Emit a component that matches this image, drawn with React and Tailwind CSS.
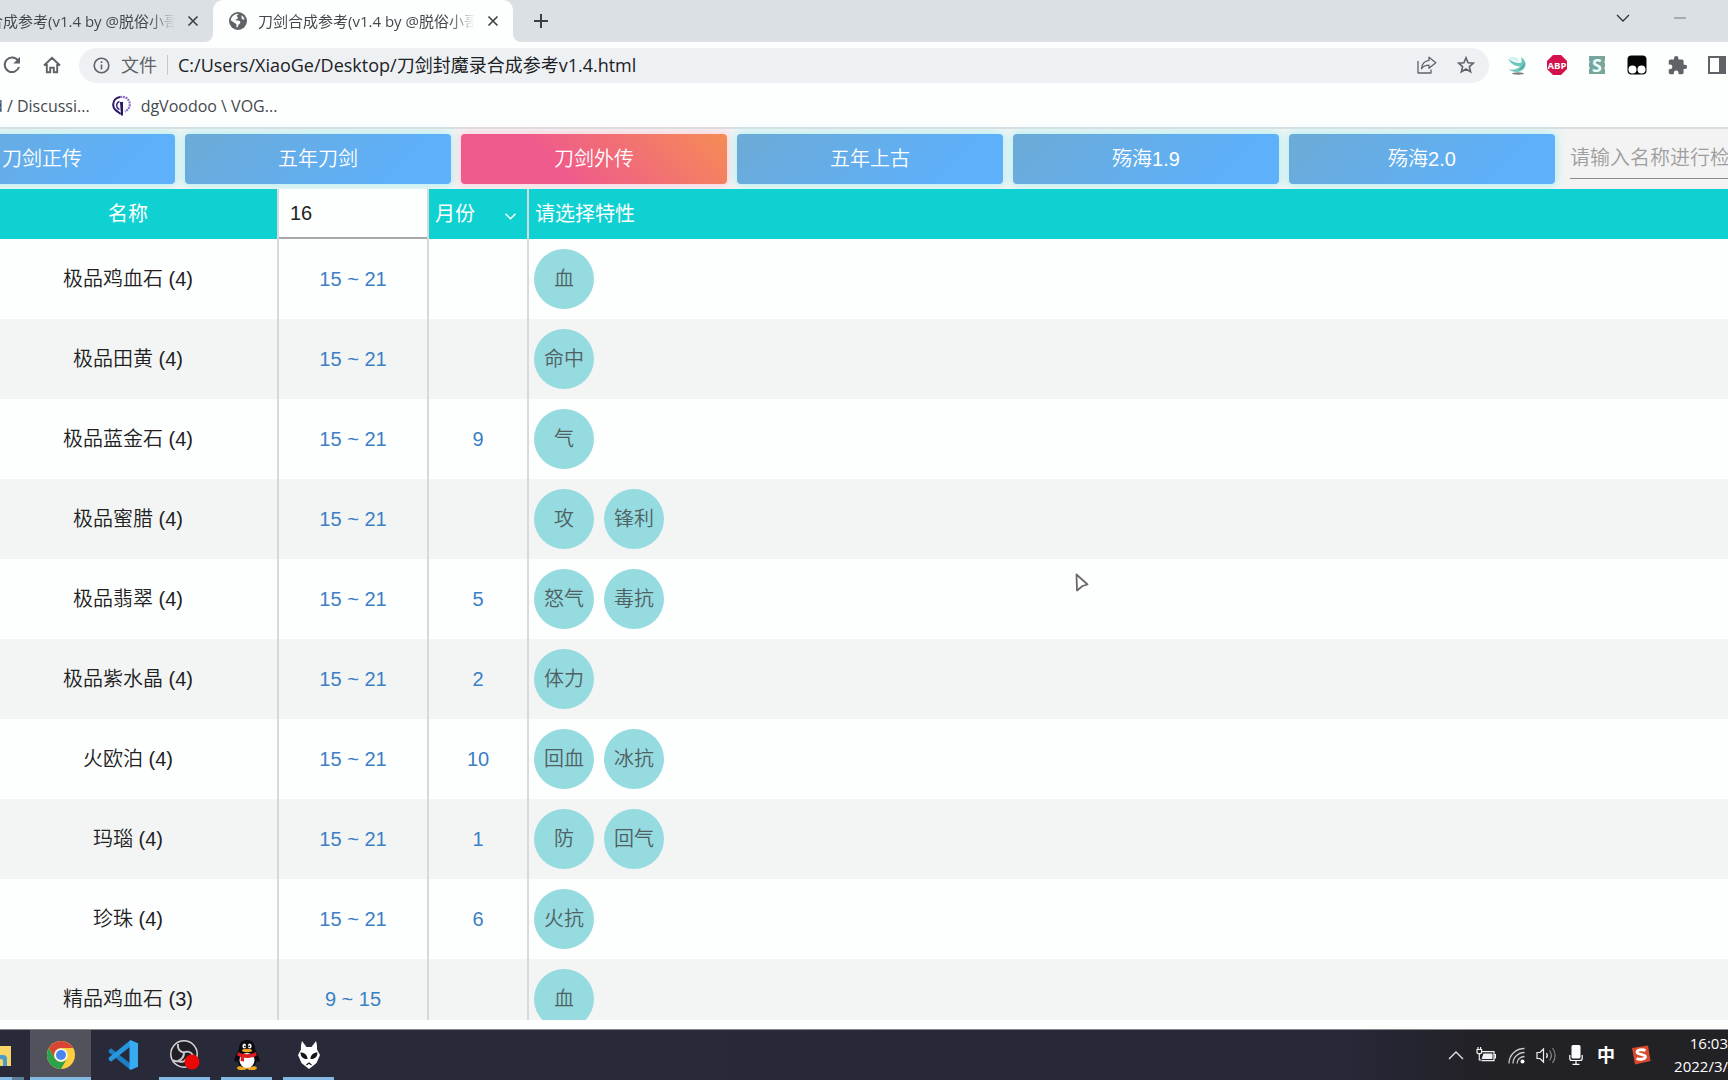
import React, { useState } from "react";

const UI_FONT = "font-['Open_Sans','Noto_Sans_CJK_SC',sans-serif]";

const versions = ["刀剑正传", "五年刀剑", "刀剑外传", "五年上古", "殇海1.9", "殇海2.0"];

const rows = [
  { name: "极品鸡血石 (4)", level: "15 ~ 21", month: "", traits: ["血"] },
  { name: "极品田黄 (4)", level: "15 ~ 21", month: "", traits: ["命中"] },
  { name: "极品蓝金石 (4)", level: "15 ~ 21", month: "9", traits: ["气"] },
  { name: "极品蜜腊 (4)", level: "15 ~ 21", month: "", traits: ["攻", "锋利"] },
  { name: "极品翡翠 (4)", level: "15 ~ 21", month: "5", traits: ["怒气", "毒抗"] },
  { name: "极品紫水晶 (4)", level: "15 ~ 21", month: "2", traits: ["体力"] },
  { name: "火欧泊 (4)", level: "15 ~ 21", month: "10", traits: ["回血", "冰抗"] },
  { name: "玛瑙 (4)", level: "15 ~ 21", month: "1", traits: ["防", "回气"] },
  { name: "珍珠 (4)", level: "15 ~ 21", month: "6", traits: ["火抗"] },
  { name: "精品鸡血石 (3)", level: "9 ~ 15", month: "", traits: ["血"] },
];

function CloseIcon() {
  return (
    <svg width="12" height="12" viewBox="0 0 12 12" stroke="#3c4043" strokeWidth="1.6">
      <path d="M1.5 1.5l9 9M10.5 1.5l-9 9" />
    </svg>
  );
}

function GlobeIcon() {
  return (
    <svg width="18" height="18" viewBox="0 0 18 18">
      <circle cx="9" cy="9" r="9" fill="#5f6368" />
      <path
        d="M9.6 1.8c-.4 1.2-1.6 1-1.8 2.2-.1.9 1.3.8 1.1 1.9-.2 1.2-1.4.8-2 1.6-.4.6.2 1.1 1 1.1 1.5 0 3.2.3 3.4 1.7.2 1.4-1.5 1.7-2 3-.3.8-.5 1.7-1.2 2.5-.9-.5-.6-1.9-.6-2.8 0-1.6-1.7-1.6-2.6-2.5L1.8 8.3C2.1 5 5.2 1.7 9.6 1.8z"
        fill="#fdfefe"
      />
      <path d="M12.4 3.2c1.5.9 2.7 2.3 3.1 4-1 .4-2.3.2-2.8-.8-.4-.9.2-2.1-.3-3.2z" fill="#fdfefe" />
    </svg>
  );
}

function Tab({ active }) {
  return (
    <div
      className={
        active
          ? "relative flex w-[300px] shrink-0 items-center rounded-t-[10px] bg-[#fdfefe] pl-4"
          : "-ml-[87px] flex w-[300px] shrink-0 items-center pl-4"
      }
    >
      {active && (
        <>
          <svg className="absolute bottom-0 -left-2" width="8" height="8" viewBox="0 0 8 8">
            <path d="M8 0v8H0a8 8 0 0 0 8-8z" fill="#fdfefe" />
          </svg>
          <svg className="absolute -right-2 bottom-0" width="8" height="8" viewBox="0 0 8 8">
            <path d="M0 0v8h8a8 8 0 0 1-8-8z" fill="#fdfefe" />
          </svg>
        </>
      )}
      <GlobeIcon />
      <span className="ml-[11px] w-[217px] shrink-0 overflow-hidden text-[15px] whitespace-nowrap text-[#45494d] [mask-image:linear-gradient(to_right,#000_88%,transparent)]">
        刀剑合成参考(v1.4 by @脱俗小哥
      </span>
      <button aria-label="关闭标签页" className="ml-3">
        <CloseIcon />
      </button>
    </div>
  );
}

function TabStrip() {
  return (
    <div className="flex h-[42px] shrink-0 bg-[#dbe0e4]">
      <Tab />
      <Tab active />
      <button aria-label="新标签页" className="ml-5">
        <svg width="16" height="16" viewBox="0 0 16 16" stroke="#3c4043" strokeWidth="2">
          <path d="M8 1v14M1 8h14" />
        </svg>
      </button>
      <div className="ml-auto flex h-9 items-center gap-11 pr-[42px]">
        <button aria-label="搜索标签页">
          <svg width="14" height="8" viewBox="0 0 14 8" fill="none" stroke="#303336" strokeWidth="1.3">
            <path d="M1 1l6 6 6-6" />
          </svg>
        </button>
        <button aria-label="最小化">
          <svg width="12" height="8" viewBox="0 0 12 8" stroke="#8b8f93" strokeWidth="1.3">
            <path d="M0 4h12" />
          </svg>
        </button>
      </div>
    </div>
  );
}

function AddressBar() {
  return (
    <div className="flex h-[46px] shrink-0 items-center bg-[#fdfefe]">
      <button aria-label="重新加载" className="-ml-2 flex w-10 shrink-0 justify-center">
        <svg width="18" height="18" viewBox="0 0 18 18">
          <path d="M15 4.5A7.3 7.3 0 1 0 16 11" fill="none" stroke="#5f6368" strokeWidth="2" />
          <path d="M17 0.8v6.7h-6.7z" fill="#5f6368" />
        </svg>
      </button>
      <button aria-label="主页" className="flex w-10 shrink-0 justify-center">
        <svg width="18" height="18" viewBox="0 0 18 18" fill="none" stroke="#5f6368" strokeWidth="1.9">
          <path d="M1 9.5L9 1.8l8 7.7M3.8 8v8.2h3.4v-4.5h3.6v4.5h3.4V8" />
        </svg>
      </button>
      <div className="ml-[7px] flex h-[35px] min-w-0 flex-1 items-center rounded-full bg-[#eef1f3] px-[14px]">
        <svg width="17" height="17" viewBox="0 0 17 17" fill="none" stroke="#5f6368" strokeWidth="1.6">
          <circle cx="8.5" cy="8.5" r="7.3" />
          <path d="M8.5 7.5v5M8.5 4.3v1.8" />
        </svg>
        <span className="ml-[11px] text-lg text-[#5f6368]">文件</span>
        <span className="mx-[10px] h-5 w-px bg-[#c4c8cb]" />
        <input
          aria-label="地址"
          className="min-w-0 flex-1 bg-transparent text-lg text-[#202124] outline-none"
          defaultValue="C:/Users/XiaoGe/Desktop/刀剑封魔录合成参考v1.4.html"
        />
        <button aria-label="分享" className="mr-5">
          <svg width="20" height="18" viewBox="0 0 20 18" fill="none" stroke="#5f6368" strokeWidth="1.3" strokeLinejoin="round">
            <path d="M1 5v12h13v-3.5" />
            <path d="M12 1.2l6.8 5.6L12 12.3V9.2c-3.4 0-5.8 1.2-7.5 3.5.4-4.3 3-7.700 7.500-8.300z" />
          </svg>
        </button>
        <button aria-label="收藏">
          <svg width="18" height="18" viewBox="0 0 18 18" fill="none" stroke="#5f6368" strokeWidth="1.6">
            <path d="M9 1.8l2.1 4.900 5.300.4-4 3.500 1.200 5.200L9 13l-4.600 2.800 1.200-5.200-4-3.500 5.300-.4z" />
          </svg>
        </button>
      </div>
      <Extensions />
    </div>
  );
}

function Extensions() {
  return (
    <div className="-mr-[9px] ml-2 flex shrink-0 items-center">
      <button aria-label="Internet Download" className="flex w-10 justify-center">
        <svg width="20" height="20" viewBox="0 0 20 20">
          <ellipse cx="11" cy="18.5" rx="6" ry="1.2" fill="#777d7c" />
          <path d="M1 3.5c3 2.5 7.5 4.5 13 4.5.8-2 .8-4-.2-6C18.5 4.5 20 9.5 17 13.5c-3.5 4.5-10.5 4.5-15.5 1 5.5.5 10-.5 11.5-3C8 11.5 3.5 8.5 1 3.5z" fill="#6fc7be" />
          <path d="M2 3c3-1.8 6-1.5 8.5.5l2 3C8.5 6.5 4.5 5 2 3z" fill="#d2f1ee" />
          <path d="M17.5 7c.8 4-2 7.5-7 8.5 3.5-2 6-4.5 7-8.5z" fill="#489b94" />
        </svg>
      </button>
      <button aria-label="Adblock Plus" className="flex w-10 justify-center">
        <svg width="20" height="20" viewBox="0 0 20 20">
          <path d="M6 0h8l6 6v8l-6 6H6l-6-6V6z" fill="#d2114d" />
          <text x="10" y="13.5" fontSize="9.5" fontWeight="700" fill="#fff" textAnchor="middle" fontFamily="Open Sans">
            ABP
          </text>
        </svg>
      </button>
      <button aria-label="Stylus" className="flex w-10 justify-center">
        <svg width="18" height="20" viewBox="0 0 18 20">
          <path d="M1 1h16v5l-1 1 1 1v4l-1 1 1 1v5H1v-5l1-1-1-1V8l1-1-1-1z" fill="#78a69c" />
          <text x="9" y="16.5" fontSize="18" fontWeight="700" fill="#e9fffa" textAnchor="middle" fontFamily="Open Sans">
            S
          </text>
        </svg>
      </button>
      <button aria-label="Tampermonkey" className="flex w-10 justify-center">
        <svg width="20" height="20" viewBox="0 0 20 20">
          <rect x="0.5" y="0.5" width="19" height="19" rx="4" fill="#050505" />
          <circle cx="5.5" cy="14.5" r="4" fill="#fff" />
          <circle cx="14.5" cy="14.5" r="4" fill="#fff" />
        </svg>
      </button>
      <button aria-label="扩展程序" className="flex w-10 justify-center">
        <svg width="21" height="21" viewBox="0 0 24 24" fill="#5f6368">
          <path d="M20.5 11H19V7c0-1.1-.9-2-2-2h-4V3.5a2.5 2.5 0 0 0-5 0V5H4c-1.1 0-2 .9-2 2v3.8h1.5a2.7 2.7 0 0 1 0 5.4H2V20c0 1.1.9 2 2 2h3.8v-1.5a2.7 2.7 0 0 1 5.4 0V22H17c1.1 0 2-.9 2-2v-4h1.5a2.5 2.5 0 0 0 0-5z" />
        </svg>
      </button>
      <button aria-label="侧边栏" className="flex w-10 items-center justify-center">
        <svg width="18" height="18" viewBox="0 0 18 18">
          <path d="M1 1h16v16H1z" fill="none" stroke="#5f6368" strokeWidth="2" />
          <path d="M11 1h6v16h-6z" fill="#5f6368" />
        </svg>
      </button>
    </div>
  );
}

function Bookmarks() {
  return (
    <div className="flex h-[41px] shrink-0 items-center border-b-2 border-[#d9dde0] bg-[#fdfefe] pb-1 text-base text-[#45494d]">
      <a href="#discussions" className="-ml-[7px] whitespace-nowrap">
        d / Discussi...
      </a>
      <a href="#dgvoodoo" className="ml-[22px] flex items-center gap-[9px] whitespace-nowrap">
        <svg width="20" height="22" viewBox="0 0 20 22" fill="none">
          <path d="M8 2C4 2.5 1.3 5.5 1.2 9.5c0 3.5 2 6 5 7.5l2.5 2" stroke="#2a1766" strokeWidth="2" />
          <path d="M7.5 6.5C5 7.5 4.3 9.5 5 12c.4 1.2 1.3 2.2 2.5 2.5" stroke="#3c2488" strokeWidth="1.5" />
          <path d="M8 7h3v13.5H9z" fill="#2a1766" />
          <path d="M8 2c6-1 9.5 2.5 9.8 7 0 3.5-1.8 6-5 7.5" stroke="#8b6cc4" strokeWidth="2.2" strokeDasharray="2 .8" />
        </svg>
        dgVoodoo \ VOG...
      </a>
    </div>
  );
}

function VersionBar() {
  const [current, setCurrent] = useState("刀剑外传");

  return (
    <nav className="-ml-[91px] flex h-[60px] shrink-0 items-start gap-[10px] bg-[#f3f3f3] pt-[5px]">
      {versions.map((v) => (
        <button
          key={v}
          onClick={() => setCurrent(v)}
          className={
            v === current
              ? "h-[50px] flex-1 rounded bg-[linear-gradient(45deg,#ef5a8c_35%,#f58c55)] text-white shadow-[0_0_8px_2px_#fbd3de]"
              : "h-[50px] flex-1 rounded bg-[linear-gradient(135deg,#6aabda_10%,#5eb0fb_80%)] text-white shadow-[0_0_8px_2px_#b4f0f2]"
          }
        >
          {v}
        </button>
      ))}
      <input
        aria-label="名称检索"
        placeholder="请输入名称进行检索"
        className="ml-[5px] h-[45px] w-[158px] shrink-0 border-b border-[#8a8a8a] bg-transparent pt-1 outline-none placeholder:text-[#9e9e9e]"
      />
    </nav>
  );
}

function MaterialTable() {
  const [level, setLevel] = useState("16");

  return (
    <div className="relative -ml-[21px] min-h-0 flex-1 overflow-hidden">
      <table className="w-full table-fixed border-separate border-spacing-0 text-center">
        <colgroup>
          <col className="w-[300px]" />
          <col className="w-[150px]" />
          <col className="w-[100px]" />
          <col />
        </colgroup>
        <thead>
          <tr className="h-[50px] bg-[#10d1d2] text-white">
            <th className="border-r-2 border-[#d8dada] p-0 font-normal">名称</th>
            <th className="border-r-2 border-[#d8dada] p-0 font-[350]">
              <input
                aria-label="等级"
                value={level}
                onChange={(e) => setLevel(e.target.value)}
                className="block h-[50px] w-full border-b-2 border-[#a8a8a8] bg-[#fdfefe] px-[11px] pt-px text-[#212121] outline-none"
              />
            </th>
            <th className="border-r-2 border-[#d8dada] p-0 font-normal">
              <div className="relative">
                <select aria-label="月份" className="block h-[50px] w-full appearance-none pl-[6px] outline-none">
                  <option>月份</option>
                </select>
                <svg
                  className="pointer-events-none absolute top-6 right-[11px]"
                  width="11"
                  height="7"
                  viewBox="0 0 11 7"
                  fill="none"
                  stroke="#fff"
                  strokeWidth="1.5"
                >
                  <path d="M0.5 0.8l5 5 5-5" />
                </svg>
              </div>
            </th>
            <th className="p-0 text-left font-normal">
              <button className="h-[50px] w-full pl-[6px] text-left">请选择特性</button>
            </th>
          </tr>
        </thead>
        <tbody>
          {rows.map((row) => (
            <tr key={row.name} className="h-20 bg-[#fdfefe] even:bg-[#f3f5f5]">
              <td className="border-r-2 border-[#d8dada] p-0 text-[#212121]">{row.name}</td>
              <td className="border-r-2 border-[#d8dada] p-0 text-[#3b7fc4]">{row.level}</td>
              <td className="border-r-2 border-[#d8dada] p-0 text-[#3b7fc4]">{row.month}</td>
              <td className="p-0 pl-[5px]">
                <div className="flex gap-[10px]">
                  {row.traits.map((t) => (
                    <span
                      key={t}
                      className="flex size-[60px] items-center justify-center rounded-full bg-[#95dbe0] text-[#4f6062]"
                    >
                      {t}
                    </span>
                  ))}
                </div>
              </td>
            </tr>
          ))}
        </tbody>
      </table>
    </div>
  );
}

function TaskButton({ label, active, running, children }) {
  return (
    <button
      aria-label={label}
      className={
        active
          ? "flex w-[61px] flex-col items-center justify-between bg-[#52525d]"
          : "flex w-[61px] flex-col items-center justify-between"
      }
    >
      <span className="flex flex-1 items-center pt-[2px]">{children}</span>
      <span
        className={
          active ? "h-[3px] w-full bg-[#83b9e3]" : running ? "h-[3px] w-[51px] bg-[#83b9e3]" : "h-[3px]"
        }
      />
    </button>
  );
}

function Taskbar() {
  return (
    <footer className="mt-[9px] flex h-[51px] shrink-0 justify-between border-t border-[#8a8a8d] bg-[linear-gradient(to_right,#282939_0%,#272838_78%,#222126_86%)]">
      <div className="flex gap-px">
        <button aria-label="文件资源管理器" className="mr-[5px] flex w-6 flex-col justify-between">
          <span className="flex flex-1 items-center pt-1">
            <svg width="12" height="20" viewBox="0 0 12 20">
              <path d="M0 0h11v20H0z" fill="#f7d667" />
              <path d="M0 9h3a4 4 0 0 1 4 4v7H3v-5a2 2 0 0 0-2-2H0z" fill="#4a9cc9" />
            </svg>
          </span>
          <span className="flex h-[3px] w-full">
            <span className="w-3 bg-[#83b9e3]" />
            <span className="flex-1 bg-[#5f7f9b]" />
          </span>
        </button>
        <TaskButton label="Chrome" active>
          <svg width="28" height="28" viewBox="0 0 28 28">
            <circle cx="14" cy="14" r="14" fill="#fccd3d" />
            <path d="M1.88 7A14 14 0 0 1 26.12 7H14a7 7 0 0 0-6.06 10.5z" fill="#d94436" />
            <path d="M1.88 7A14 14 0 0 0 14 28l6.06-10.5A7 7 0 0 1 7.94 17.5z" fill="#2ba24c" />
            <circle cx="14" cy="14" r="6.6" fill="#f4f6f8" />
            <circle cx="14" cy="14" r="5" fill="#4a84ee" />
          </svg>
        </TaskButton>
        <TaskButton label="VS Code">
          <svg width="30" height="30" viewBox="0 0 30 30">
            <path d="M0.5 10.5L3 8.2l19.5 15.3V30L1 12.5z" fill="#1c7fc4" />
            <path d="M0.5 19.5L3 21.8 22.5 6.5V0L1 17.5z" fill="#2796de" />
            <path d="M22.5 0L30 3.2v23.6L22.5 30l-1-1.5v-27z" fill="#37aaf0" />
          </svg>
        </TaskButton>
        <TaskButton label="OBS" running>
          <svg width="30" height="30" viewBox="0 0 30 30">
            <circle cx="14" cy="14" r="13.2" fill="#211f25" stroke="#d7d7d9" strokeWidth="1.5" />
            <path
              d="M8 4c-1 5 2 8 6 8.5M14 12.5c3-1.5 7-1 9 3M14 12.5c0 4-2 7-6 8.5-2 .5-4 0-5-1M23 15.5c1 2 .5 4-1 6M8 21c4 1.5 7 .5 8-2"
              fill="none"
              stroke="#c9c9cc"
              strokeWidth="2"
            />
            <circle cx="22" cy="22" r="7.5" fill="#ec0606" />
          </svg>
        </TaskButton>
        <TaskButton label="QQ" running>
          <svg width="26" height="30" viewBox="0 0 26 30">
            <ellipse cx="8" cy="28" rx="5" ry="2" fill="#f0a91c" />
            <ellipse cx="18" cy="28" rx="5" ry="2" fill="#f0a91c" />
            <path d="M13 0C7.5 0 5 4 5 9c0 1-3.5 6-4.5 10-.5 3 .8 4 2.5 1l2 5c2 3 14 3 16 0l2-5c1.7 3 3 2 2.5-1C24.5 15 21 10 21 9c0-5-2.5-9-8-9z" fill="#0b0b0f" />
            <ellipse cx="13" cy="20.5" rx="7.5" ry="7.5" fill="#fff" />
            <ellipse cx="10.3" cy="6" rx="1.9" ry="2.6" fill="#fff" />
            <ellipse cx="15.7" cy="6" rx="1.9" ry="2.6" fill="#fff" />
            <circle cx="10.9" cy="6.3" r="0.9" fill="#111" />
            <circle cx="15.1" cy="6.3" r="0.9" fill="#111" />
            <ellipse cx="13" cy="10.5" rx="5" ry="1.7" fill="#f0a91c" />
            <path d="M4 12c5 3 13 3 18 0l.8 3.5c-4 2-8.8 2.7-12.8 2.3v3.7l-3.5-.5.5-4c-1.5-.3-2.7-.9-3.8-1.5z" fill="#df1c22" />
          </svg>
        </TaskButton>
        <TaskButton label="foobar2000" running>
          <svg width="22" height="28" viewBox="0 0 22 28">
            <path d="M4 0l4.5 6h5L18 0c1 3 1.2 6 1 8.5L22 14l-3.5 8L11 28l-7.5-6L0 14l3-5.5C2.8 6 3 3 4 0z" fill="#fff" />
            <path d="M2.5 11.5c4 0 7 2.5 7 6.5-4 .5-7-2-7-6.5zM19.5 11.5c-4 0-7 2.5-7 6.5 4 .5 7-2 7-6.5z" fill="#16161c" />
            <path d="M8.5 24l2.5-2 2.5 2" fill="none" stroke="#16161c" strokeWidth="1.2" />
          </svg>
        </TaskButton>
      </div>
      <div className="flex items-center text-[15px] leading-[23px] text-white">
        <button aria-label="显示隐藏的图标" className="flex w-[30px] justify-center">
          <svg width="16" height="10" viewBox="0 0 16 10" fill="none" stroke="#e6e6e8" strokeWidth="1.3">
            <path d="M1 9l7-7 7 7" />
          </svg>
        </button>
        <button aria-label="电源" className="flex w-[30px] justify-center">
          <svg width="20" height="16" viewBox="0 0 20 16" fill="none" stroke="#f0f0f2" strokeWidth="1.2">
            <path d="M6 4.6h12v9H5.5M18.5 7.5h1v3.5h-1" />
            <path d="M7.5 6.5h9v5.5h-11z" fill="#f0f0f2" stroke="none" />
            <path d="M1 2.5h4.6v2.7c0 2-4.6 2-4.6 0zM2 2.5V0M4.6 2.5V0M3.3 7v6h2" />
          </svg>
        </button>
        <button aria-label="网络" className="flex w-[30px] justify-center">
          <svg width="17" height="17" viewBox="0 0 17 17" fill="none" stroke="#c9c9cc" strokeWidth="1.3">
            <path d="M1 16.5C1 8 8 1.5 16.5 1.5M5 16.5C5 10.5 10 5.5 16.5 5.5M9 16.5c0-4 3.5-7 7.5-7" />
            <circle cx="14.5" cy="14.5" r="2" fill="#fff" stroke="none" />
          </svg>
        </button>
        <button aria-label="音量" className="flex w-[30px] justify-center">
          <svg width="21" height="17" viewBox="0 0 21 17" fill="none" stroke="#f0f0f2" strokeWidth="1.2">
            <path d="M1 5.5h3L7.5 2v13L4 11.5H1zM10.5 6c1 1.5 1 3.5 0 5" />
            <path d="M13.5 3.5c2.2 3 2.2 7 0 10M16.5 1c3.5 4.5 3.5 10.5 0 15" stroke="#85858a" />
          </svg>
        </button>
        <button aria-label="麦克风" className="flex w-[30px] justify-center">
          <svg width="14" height="20" viewBox="0 0 14 20" fill="none" stroke="#fff" strokeWidth="1.2">
            <rect x="2.5" y="0" width="9" height="13.5" rx="1.5" fill="#fff" stroke="none" />
            <path d="M0.8 10v3.5c0 1.6.8 2 2.2 2h8c1.4 0 2.2-.4 2.2-2V10M7 15.5v3.8M3.5 19.3h7" />
          </svg>
        </button>
        <button className="w-[30px] text-lg font-bold">中</button>
        <button aria-label="搜狗输入法" className="flex w-10 justify-center">
          <svg width="20" height="20" viewBox="0 0 20 20">
            <path d="M1 3l16-2.5L19.5 16 4 19.5z" fill="#d9492d" />
            <path
              d="M14.5 5.5C11 4 6 5 6 7.3c0 2.5 8.5 1.5 8.5 4.5 0 2.3-5.5 3.2-9 1.7"
              fill="none"
              stroke="#fff"
              strokeWidth="2.8"
            />
          </svg>
        </button>
        <time className="flex w-[67px] flex-col items-end overflow-hidden whitespace-nowrap">
          <span>16:03</span>
          <span>2022/3/</span>
        </time>
      </div>
    </footer>
  );
}

function App() {
  return (
    <div className={`relative flex h-screen w-full flex-col overflow-hidden bg-[#fdfefe] ${UI_FONT}`}>
      <TabStrip />
      <AddressBar />
      <Bookmarks />
      <main className="flex min-h-0 flex-1 flex-col font-['Liberation_Sans','Noto_Sans_CJK_SC',sans-serif] text-xl font-[350]">
        <VersionBar />
        <MaterialTable />
      </main>
      <Taskbar />
      {/* mouse pointer */}
      <svg
        className="pointer-events-none absolute top-[573px] left-[1075px]"
        width="14"
        height="19"
        viewBox="0 0 14 19"
        fill="#fff"
        stroke="#6a6a6a"
        strokeWidth="1.8"
        strokeLinejoin="round"
      >
        <path d="M1.5 1.5L12.5 11.5 7.5 13 2 17.5z" />
      </svg>
    </div>
  );
}

export default App;
